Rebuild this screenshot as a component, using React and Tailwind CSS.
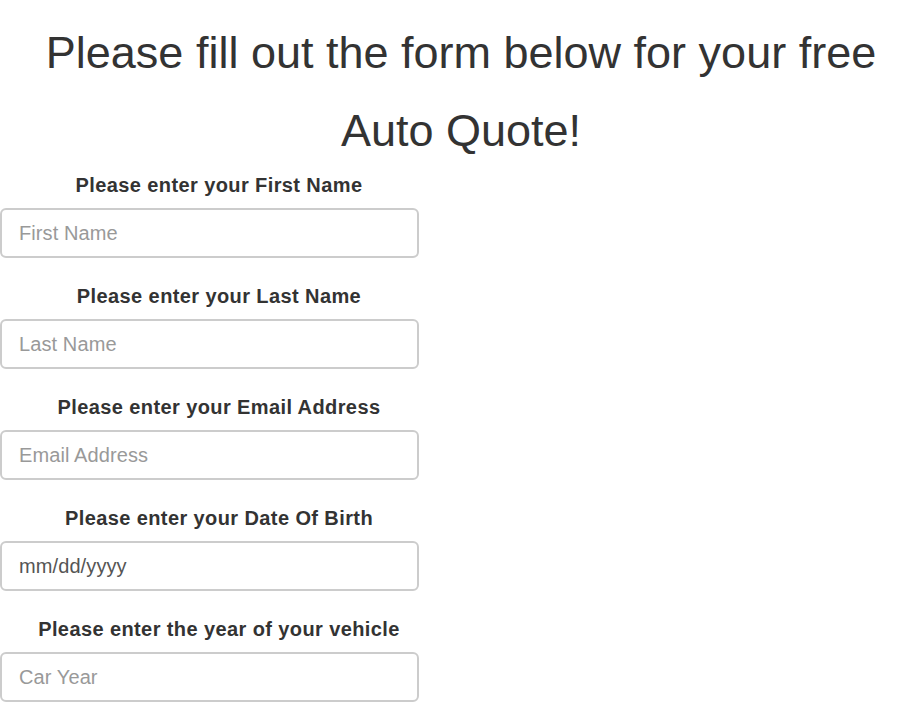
import React from "react";

const fields = [
  { label: "Please enter your First Name", ph: "First Name" },
  { label: "Please enter your Last Name", ph: "Last Name" },
  { label: "Please enter your Email Address", ph: "Email Address" },
  { label: "Please enter your Date Of Birth", ph: "mm/dd/yyyy", date: true },
  { label: "Please enter the year of your vehicle", ph: "Car Year" },
];

export default function App() {
  return (
    <div
      className="min-h-[719px] w-full bg-white text-[#333]"
      style={{ fontFamily: '"Liberation Sans", Arial, sans-serif' }}
    >
      <h1 className="mt-[14px] pl-[32px] pr-[8px] text-center text-[45px] font-normal leading-[78px]">
        Please fill out the form below for your free Auto Quote!
      </h1>
      <form className="mt-px flex w-[438px] flex-col gap-[24px]">
        {fields.map((f) => (
          <div key={f.ph} className="flex flex-col">
            <label className="block text-center text-[20px] font-bold leading-[28px] tracking-[0.4px]">
              {f.label}
            </label>
            <input
              type="text"
              placeholder={f.ph}
              className={
                "mt-[9px] h-[50px] w-[419px] rounded-[6px] border-2 border-[#cccccc] bg-white px-[17px] text-[20px] tracking-[0.1px] outline-none " +
                (f.date
                  ? "placeholder:text-[#555]"
                  : "placeholder:text-[#999]")
              }
              style={{ fontFamily: '"Liberation Sans", Arial, sans-serif' }}
            />
          </div>
        ))}
      </form>
    </div>
  );
}
